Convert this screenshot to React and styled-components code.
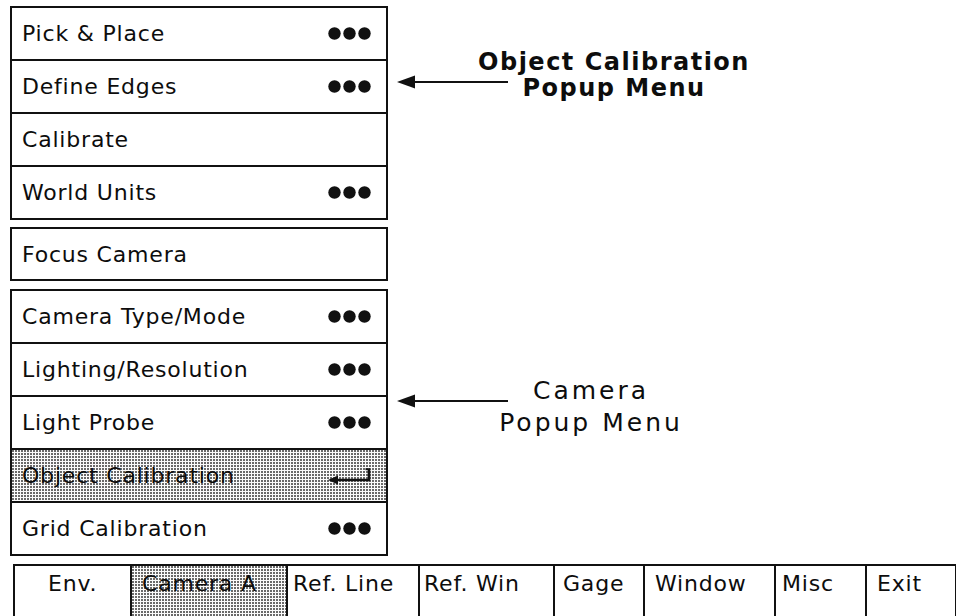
import React from "react";
import styled, { createGlobalStyle, css } from "styled-components";

const GlobalStyle = createGlobalStyle`
  html, body { margin: 0; padding: 0; background: #fff; }
  body { font-family: "DejaVu Sans", "Open Sans", sans-serif; color: #0d0d0d; overflow: hidden; }
`;

const Page = styled.div`
  width: 956px;
  height: 616px;
  overflow: hidden;
  display: flex;
  flex-direction: column;
  background: #fff;
`;

const Main = styled.div`
  display: flex;
  padding: 6px 0 0 10px;
`;

const MenuColumn = styled.div`
  width: 378px;
  display: flex;
  flex-direction: column;
`;

const MenuGroup = styled.div`
  border: 2px solid #111;
  margin-top: ${(p) => p.$gap || 0}px;
`;

const halftone = css`
  background-color: #fbfbfb;
  background-image: radial-gradient(circle at 1px 1px, #6a6a6a 0.75px, transparent 0.95px);
  background-size: 3px 3px;
`;

const MenuRow = styled.div`
  height: ${(p) => p.$h || 51}px;
  display: flex;
  align-items: center;
  justify-content: space-between;
  padding: 0 14px 0 10px;
  font-size: 22px;
  letter-spacing: 0.8px;
  ${(p) => p.$active && halftone}
  & + & { border-top: 2px solid #111; }
`;

const Annotations = styled.div`
  display: flex;
  flex-direction: column;
  padding-left: 9px;
`;

const Callout = styled.div`
  display: grid;
  margin-top: ${(p) => p.$top}px;
`;

const CalloutArrow = styled.svg`
  grid-area: 1 / 1;
  margin-top: ${(p) => p.$top}px;
  display: block;
`;

const CalloutLabel = styled.div`
  grid-area: 1 / 1;
  margin-left: ${(p) => p.$left}px;
  width: 320px;
  text-align: center;
  font-size: ${(p) => p.$size}px;
  font-weight: ${(p) => (p.$bold ? 700 : 400)};
  letter-spacing: ${(p) => p.$ls}px;
  line-height: ${(p) => p.$lh}px;
  white-space: nowrap;
`;

const TabBar = styled.div`
  display: flex;
  margin: 8px 0 0 13px;
  width: 942px;
  border-top: 2px solid #111;
  border-left: 2px solid #111;
`;

const Tab = styled.div`
  width: ${(p) => p.$w}px;
  height: 52px;
  box-sizing: border-box;
  border-right: 2px solid #111;
  padding: 4px 0 0 ${(p) => p.$pad}px;
  font-size: 22px;
  letter-spacing: 0.8px;
  line-height: 28px;
  white-space: nowrap;
  ${(p) => p.$active && halftone}
`;

const Dots = () => (
  <svg width="44" height="13" viewBox="0 0 44 13">
    <circle cx="6.5" cy="6.5" r="6.2" fill="#111" />
    <circle cx="21.5" cy="6.5" r="6.2" fill="#111" />
    <circle cx="36.5" cy="6.5" r="6.2" fill="#111" />
  </svg>
);

const ReturnMark = () => (
  <svg width="44" height="18" viewBox="0 0 44 18">
    <polygon points="0,13 10,8.5 10,17.5" fill="#111" />
    <line x1="8" y1="13" x2="41" y2="13" stroke="#111" strokeWidth="2.4" />
    <line x1="41" y1="14.2" x2="41" y2="2" stroke="#111" strokeWidth="2.6" />
    <line x1="37.5" y1="2.2" x2="42" y2="2.2" stroke="#111" strokeWidth="2" />
  </svg>
);

const Arrow = ({ top }) => (
  <CalloutArrow $top={top} width="112" height="14" viewBox="0 0 112 14">
    <polygon points="0,7 18,0.5 18,13.5" fill="#111" />
    <line x1="16" y1="7" x2="111" y2="7" stroke="#111" strokeWidth="2" />
  </CalloutArrow>
);

const calibrationItems = [
  { label: "Pick & Place", more: true },
  { label: "Define Edges", more: true },
  { label: "Calibrate" },
  { label: "World Units", more: true },
];

const cameraItems = [
  { label: "Camera Type/Mode", more: true },
  { label: "Lighting/Resolution", more: true },
  { label: "Light Probe", more: true },
  { label: "Object Calibration", active: true },
  { label: "Grid Calibration", more: true },
];

const tabs = [
  { label: "Env.", w: 117, pad: 33 },
  { label: "Camera A", w: 156, pad: 10, active: true },
  { label: "Ref. Line", w: 132, pad: 5 },
  { label: "Ref. Win", w: 135, pad: 4 },
  { label: "Gage", w: 90, pad: 8 },
  { label: "Window", w: 131, pad: 10 },
  { label: "Misc", w: 91, pad: 6 },
  { label: "Exit", w: 90, pad: 10 },
];

const Row = ({ item }) => (
  <MenuRow $active={item.active}>
    <span>{item.label}</span>
    {item.more && <Dots />}
    {item.active && <ReturnMark />}
  </MenuRow>
);

export default function App() {
  return (
    <Page>
      <GlobalStyle />
      <Main>
        <MenuColumn>
          <MenuGroup>
            {calibrationItems.map((it) => (
              <Row key={it.label} item={it} />
            ))}
          </MenuGroup>
          <MenuGroup $gap={7}>
            <MenuRow $h={50}>
              <span>Focus Camera</span>
            </MenuRow>
          </MenuGroup>
          <MenuGroup $gap={8}>
            {cameraItems.map((it) => (
              <Row key={it.label} item={it} />
            ))}
          </MenuGroup>
        </MenuColumn>
        <Annotations>
          <Callout $top={43}>
            <Arrow top={26} />
            <CalloutLabel $left={57} $size={24} $lh={26} $ls={1.5} $bold>
              Object Calibration
              <br />
              Popup Menu
            </CalloutLabel>
          </Callout>
          <Callout $top={274}>
            <Arrow top={19} />
            <CalloutLabel $left={34} $size={25} $lh={32} $ls={3}>
              Camera
              <br />
              Popup Menu
            </CalloutLabel>
          </Callout>
        </Annotations>
      </Main>
      <TabBar>
        {tabs.map((t) => (
          <Tab key={t.label} $w={t.w} $pad={t.pad} $active={t.active}>
            {t.label}
          </Tab>
        ))}
      </TabBar>
    </Page>
  );
}
